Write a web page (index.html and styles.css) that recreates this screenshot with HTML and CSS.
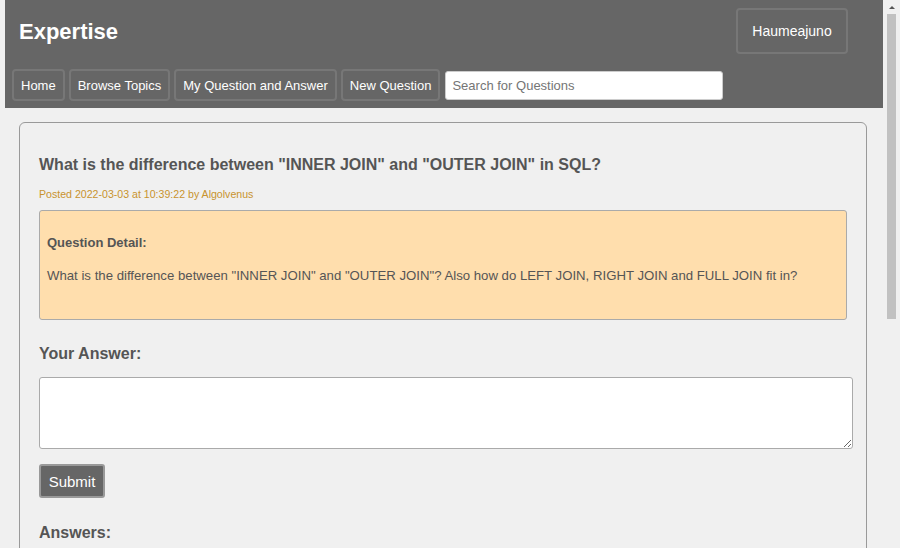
FILE: index.html
```html
<!DOCTYPE html>
<html>
<head>
<meta charset="utf-8">
<link rel="stylesheet" href="styles.css">
</head>
<body>
<div class="page">
  <div class="main">
    <header class="header">
      <div class="top-row">
        <div class="brand">Expertise</div>
        <button class="user-btn">Haumeajuno</button>
      </div>
      <nav class="nav">
        <button class="nav-btn">Home</button>
        <button class="nav-btn">Browse Topics</button>
        <button class="nav-btn">My Question and Answer</button>
        <button class="nav-btn">New Question</button>
        <input class="search" type="text" placeholder="Search for Questions">
      </nav>
    </header>
    <section class="card">
      <h2 class="q-title">What is the difference between "INNER JOIN" and "OUTER JOIN" in SQL?</h2>
      <p class="posted">Posted 2022-03-03 at 10:39:22 by Algolvenus</p>
      <div class="detail">
        <p class="detail-label">Question Detail:</p>
        <p class="detail-text">What is the difference between "INNER JOIN" and "OUTER JOIN"? Also how do LEFT JOIN, RIGHT JOIN and FULL JOIN fit in?</p>
      </div>
      <h3 class="section-title">Your Answer:</h3>
      <textarea class="answer-box"></textarea>
      <button class="submit">Submit</button>
      <h3 class="section-title answers">Answers:</h3>
    </section>
  </div>
  <div class="scrollbar">
    <div class="sb-arrow"></div>
    <div class="sb-thumb"></div>
  </div>
</div>
</body>
</html>
```
FILE: styles.css
```css
html, body {
  margin: 0;
  padding: 0;
  background: #f0f0f0;
  font-family: "Liberation Sans", Arial, sans-serif;
  color: #555;
}
.page {
  display: flex;
  height: 548px;
  overflow: hidden;
}
.main {
  flex: 1;
  min-width: 0;
}
.header {
  margin-left: 5px;
  background: #666;
  height: 108px;
  box-sizing: border-box;
  padding: 8px 35px 0 7px;
}
.top-row {
  display: flex;
  justify-content: space-between;
  align-items: flex-start;
}
.brand {
  color: #fff;
  font-weight: bold;
  font-size: 22px;
  padding: 11px 0 0 7px;
}
.user-btn {
  font-family: inherit;
  background: transparent;
  color: #fff;
  font-size: 14px;
  border: 2px solid #777;
  border-radius: 4px;
  width: 112px;
  height: 46px;
}
.nav {
  display: flex;
  align-items: center;
  gap: 4px;
  margin-top: 15px;
}
.nav-btn {
  font-family: inherit;
  background: transparent;
  color: #fff;
  font-size: 13px;
  border: 2px solid #777;
  border-radius: 4px;
  height: 32px;
  padding: 0 7px;
}
.search {
  margin-left: 1px;
  width: 278px;
  height: 29px;
  box-sizing: border-box;
  border: 1px solid #ccc;
  border-radius: 3px;
  padding: 0 6px;
  font-family: inherit;
  font-size: 13px;
  background: #fff;
}
.search::placeholder {
  color: #757575;
}
.card {
  margin: 14px 16px 0 19px;
  border: 1px solid #999;
  border-radius: 6px;
  padding: 24px 19px 20px 19px;
  height: 600px;
}
.q-title {
  font-size: 16px;
  margin: 9px 0 0;
  font-weight: bold;
  color: #555;
}
.posted {
  font-size: 10.6px;
  color: #c8932e;
  margin: 14px 0 10px;
}
.detail {
  background: #ffdead;
  border: 1px solid #aaa;
  border-radius: 3px;
  padding: 15px 7px 36px;
}
.detail-label {
  font-weight: bold;
  font-size: 13px;
  margin: 9px 0 18px;
}
.detail-text {
  font-size: 13.2px;
  margin: 0;
}
.section-title {
  font-size: 16px;
  font-weight: bold;
  margin: 25px 0 14px;
}
.answer-box {
  display: block;
  width: calc(100% + 6px);
  height: 72px;
  box-sizing: border-box;
  border: 1px solid #aaa;
  border-radius: 3px;
  background: #fff;
  resize: vertical;
}
.submit {
  display: block;
  margin-top: 15px;
  background: #666;
  color: #fff;
  font-family: inherit;
  font-size: 15px;
  border: 2px solid #999;
  border-radius: 3px;
  width: 66px;
  height: 34px;
}
.answers {
  margin-top: 26px;
}
.scrollbar {
  width: 17px;
  flex: none;
  background: #f0f0f0;
  display: flex;
  flex-direction: column;
  align-items: center;
}
.sb-arrow {
  margin-top: 6px;
  width: 0;
  height: 0;
  border-left: 3px solid transparent;
  border-right: 3px solid transparent;
  border-bottom: 3px solid #555;
}
.sb-thumb {
  margin-top: 5px;
  width: 9px;
  height: 305px;
  background: #c1c1c1;
}
```
